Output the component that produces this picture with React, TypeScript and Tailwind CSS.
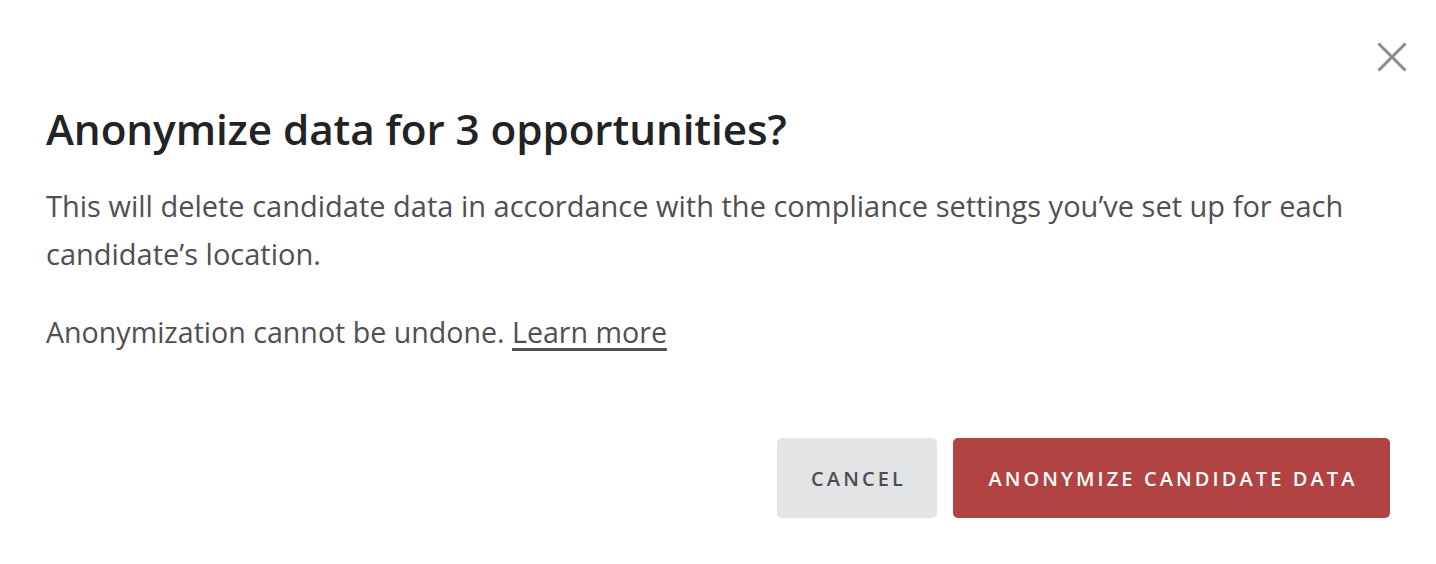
import React from "react";

export default function App() {
  return (
    <div
      className="relative w-[1436px] h-[564px] bg-white overflow-hidden"
      style={{ fontFamily: '"Open Sans", "Noto Sans", sans-serif' }}
    >
      <button
        aria-label="Close"
        className="absolute left-[1377px] top-[42px] w-[30px] h-[30px] flex items-center justify-center"
      >
        <svg width="30" height="30" viewBox="0 0 30 30">
          <path d="M1.5 1.5 L28.5 28.5 M28.5 1.5 L1.5 28.5" stroke="#8b8b8b" strokeWidth="3" strokeLinecap="butt" />
        </svg>
      </button>

      <div className="flex flex-col pl-[46px] pr-[46px] pt-[104px]">
        <h1 className="text-[42.3px] leading-[50px] font-semibold text-[#232326] tracking-[-0.1px]">
          Anonymize data for 3 opportunities?
        </h1>
        <p className="mt-[28px] text-[29px] leading-[48px] text-[#4f4f54] font-normal">
          This will delete candidate data in accordance with the compliance settings you’ve set up for each
          candidate’s location.
        </p>
        <p className="mt-[30px] text-[28.6px] leading-[48px] text-[#4f4f54]">
          Anonymization cannot be undone.{" "}
          <a className="underline decoration-[2.5px] underline-offset-[5px] text-[#4f4f54] cursor-pointer">Learn more</a>
        </p>
        <div className="mt-[82px] flex justify-end gap-[16px]">
          <button className="w-[160px] h-[80px] rounded-[5px] bg-[#e3e4e6] text-[#4d4d52] text-[20px] font-semibold tracking-[3.1px] pl-[3px] pt-[2px]">
            CANCEL
          </button>
          <button className="w-[437px] h-[80px] rounded-[5px] bg-[#b14342] text-white text-[20px] font-semibold tracking-[3.1px] pl-[3px] pt-[2px]">
            ANONYMIZE CANDIDATE DATA
          </button>
        </div>
      </div>
    </div>
  );
}
